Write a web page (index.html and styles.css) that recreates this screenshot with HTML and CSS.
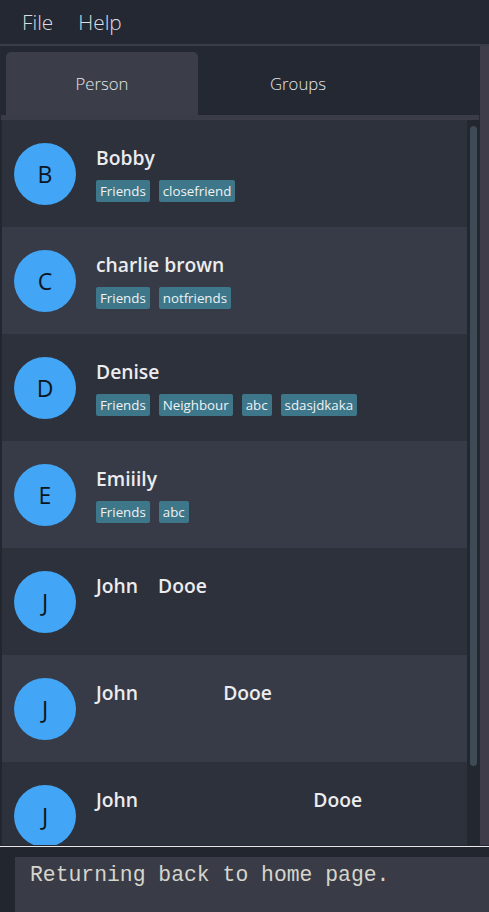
FILE: index.html
```html
<!DOCTYPE html>
<html>
<head>
<meta charset="utf-8">
<link rel="stylesheet" href="styles.css">
</head>
<body>
<div class="app">
  <div class="menubar">
    <span class="menu-item">File</span>
    <span class="menu-item">Help</span>
  </div>
  <div class="main">
    <div class="content">
      <div class="tabs">
        <div class="tab active">Person</div>
        <div class="tab">Groups</div>
      </div>
      <div class="tabline"></div>
      <div class="listwrap">
        <div class="list">
          <div class="card odd">
            <div class="avatar">B</div>
            <div class="info">
              <div class="name">Bobby</div>
              <div class="tags"><span class="tag">Friends</span><span class="tag">closefriend</span></div>
            </div>
          </div>
          <div class="card even">
            <div class="avatar">C</div>
            <div class="info">
              <div class="name">charlie brown</div>
              <div class="tags"><span class="tag">Friends</span><span class="tag">notfriends</span></div>
            </div>
          </div>
          <div class="card odd">
            <div class="avatar">D</div>
            <div class="info">
              <div class="name">Denise</div>
              <div class="tags"><span class="tag">Friends</span><span class="tag">Neighbour</span><span class="tag">abc</span><span class="tag">sdasjdkaka</span></div>
            </div>
          </div>
          <div class="card even">
            <div class="avatar">E</div>
            <div class="info">
              <div class="name">Emiiily</div>
              <div class="tags"><span class="tag">Friends</span><span class="tag">abc</span></div>
            </div>
          </div>
          <div class="card odd">
            <div class="avatar">J</div>
            <div class="info">
              <div class="name">John    Dooe</div>
              <div class="tags"></div>
            </div>
          </div>
          <div class="card even">
            <div class="avatar">J</div>
            <div class="info">
              <div class="name">John                 Dooe</div>
              <div class="tags"></div>
            </div>
          </div>
          <div class="card odd">
            <div class="avatar">J</div>
            <div class="info">
              <div class="name">John                                   Dooe</div>
              <div class="tags"></div>
            </div>
          </div>
        </div>
        <div class="scrolltrack"><div class="thumb"></div></div>
      </div>
    </div>
    <div class="rightstrip"></div>
  </div>
  <div class="divider"></div>
  <div class="bottom">
    <div class="result">Returning back to home page.</div>
  </div>
</div>
</body>
</html>
```
FILE: styles.css
```css
html, body {
  margin: 0;
  padding: 0;
  background: #232833;
  overflow: hidden;
}
.app {
  width: 489px;
  height: 912px;
  display: flex;
  flex-direction: column;
  font-family: "Open Sans", "Noto Sans", sans-serif;
}
.menubar {
  height: 44px;
  flex: none;
  display: flex;
  align-items: center;
  gap: 25px;
  padding-left: 22px;
  background: #232833;
  border-bottom: 2px solid #3a3d47;
}
.menu-item {
  color: #dcdde0;
  font-size: 20.8px;
  font-weight: 300;
}
.main {
  height: 799px;
  flex: none;
  display: flex;
}
.content {
  width: 480px;
  display: flex;
  flex-direction: column;
}
.rightstrip {
  width: 9px;
  background: #3f3d4a;
}
.tabs {
  height: 63px;
  padding-top: 6px;
  padding-left: 6px;
  display: flex;
  gap: 4px;
  background: #232833;
}
.tab {
  width: 192px;
  display: flex;
  align-items: center;
  justify-content: center;
  color: #e6e7ea;
  font-size: 16.7px;
  font-weight: 300;
  border-radius: 5px 5px 0 0;
}
.tab.active {
  background: #3b3e48;
}
.tabline {
  height: 5px;
  margin-left: 1px;
  margin-right: 1px;
  background: #3a3d47;
}
.listwrap {
  flex: 1;
  display: flex;
  overflow: hidden;
  border-left: 2px solid #21262f;
}
.list {
  flex: 1;
  overflow: hidden;
}
.card {
  height: 107px;
  display: flex;
  align-items: center;
}
.card.odd { background: #2c313c; }
.card.even { background: #363b47; }
.avatar {
  width: 62px;
  height: 62px;
  border-radius: 50%;
  background: #42a5f5;
  margin-left: 12px;
  flex: none;
  display: flex;
  align-items: center;
  justify-content: center;
  color: #0c1520;
  font-size: 23px;
  font-weight: 500;
}
.info {
  align-self: flex-start;
  padding-top: 25px;
  margin-left: 20px;
}
.name {
  color: #ececee;
  font-size: 19.3px;
  font-weight: 600;
  line-height: 26px;
  white-space: pre;
}
.tags {
  display: flex;
  gap: 9px;
  margin-top: 9px;
  height: 22px;
}
.tag {
  background: #3d7789;
  color: #f0f2f4;
  font-size: 13.3px;
  line-height: 22px;
  padding: 0 4px;
  border-radius: 2px;
}
.scrolltrack {
  width: 13px;
  background: #222730;
  padding: 6px 3px 0 3px;
  box-sizing: border-box;
}
.thumb {
  width: 7px;
  height: 640px;
  background: #3e4a55;
  border-radius: 4px;
}
.divider {
  height: 1px;
  margin-top: 1px;
  background: #e8e8e8;
}
.bottom {
  flex: 1;
  background: #21262f;
  padding: 10px 0 0 15px;
}
.result {
  height: 100%;
  background: #393c46;
  color: #d6d5cc;
  font-family: "Liberation Mono", monospace;
  font-size: 21.4px;
  padding: 6px 0 0 15px;
  box-sizing: border-box;
}
```
